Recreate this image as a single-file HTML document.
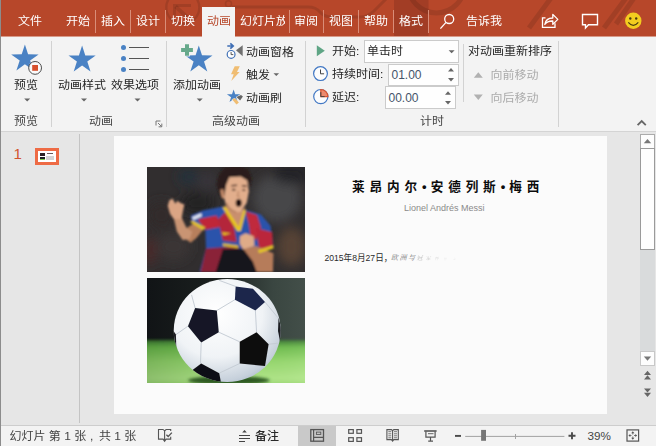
<!DOCTYPE html>
<html lang="zh-CN">
<head>
<meta charset="utf-8">
<title>PowerPoint</title>
<style>
html,body{margin:0;padding:0;}
body{width:656px;height:446px;overflow:hidden;position:relative;background:#e6e6e6;
  font-family:"Liberation Sans","Noto Sans CJK SC",sans-serif;font-size:12px;color:#262626;}
.a{position:absolute;}
.t{position:absolute;white-space:nowrap;line-height:16px;height:16px;font-size:12px;transform:scaleY(0.920);transform-origin:0 14px;}
.ns{transform:none;}
#titlebar{left:0;top:0;width:656px;height:36px;background:#b7472a;overflow:hidden;}
#titlebar .t{color:#fff;top:13px;}
.tsep{position:absolute;top:10px;width:1px;height:23px;background:#d98d78;}
#ribbon{left:0;top:36px;width:656px;height:95px;background:#f3f3f3;}
.gsep{position:absolute;top:41px;width:1px;height:86px;background:#d2d2d2;}
.glabel{color:#444;}
.dis{color:#ababab;}
.bl{letter-spacing:4.100px;font-size:13px;position:relative;top:0.500px;}
#status{left:0;top:426px;width:656px;height:20px;background:#f3f3f3;}
</style>
</head>
<body>
<!-- ===== title / tab bar ===== -->
<div id="titlebar" class="a">
  <svg class="a" style="left:0;top:0" width="656" height="36" viewBox="0 0 656 36">
    <rect x="394" y="0" width="34.500" height="36" fill="#a23d25"/>
    <g fill="none" stroke="#000" stroke-opacity="0.110">
      <circle cx="182.800" cy="7.500" r="16.500" stroke-width="2.400"/>
      <path d="M173 5.500h18M174.500 4v11.500" stroke-width="3"/>
      <path d="M175.500 6.500l11.500 10.500" stroke-width="3.800"/>
      <circle cx="228.500" cy="3.800" r="3" stroke-width="1.600"/>
    </g>
    <g fill="none" stroke="#000" stroke-opacity="0.110">
      <circle cx="436.400" cy="-15.400" r="28.300" stroke-width="5"/>
      <path d="M232 7h76q8 0 12 5t12 5h28q8 0 14-6l14-14" stroke-width="3"/>
      <path d="M529 28l22-30M604 28l22-30M616 24l18-26" stroke-width="5"/>
    </g>
  </svg>
  <svg class="a" style="left:430px;top:0" width="226" height="36" viewBox="430 0 226 36">
    <g fill="none" stroke="#fff" stroke-width="1.300">
      <circle cx="449.200" cy="19" r="4.500"/>
      <path d="M446 22.400l-5.600 6.200"/>
      <path d="M545.500 17.800h-3v9.500h12.500v-4"/>
      <path d="M544.800 24.500q1-6.500 8-6.500v-3.600l5 5-5 5v-3.400q-5.500-0.200-8 3.500z" stroke-linejoin="round"/>
      <path d="M582.500 14.500h15v10.300h-9l-3 3.200v-3.200h-3z" stroke-width="1.400"/>
    </g>
    <circle cx="633.300" cy="20.800" r="8.200" fill="#f3cd1f"/>
    <circle cx="630.300" cy="18.500" r="1.200" fill="#4a3a10"/>
    <circle cx="636.200" cy="18.500" r="1.200" fill="#4a3a10"/>
    <path d="M628.300 22.300q5 6 10 0" fill="none" stroke="#4a3a10" stroke-width="1.200"/>
  </svg>
  <div class="a" style="left:202px;top:7px;width:33px;height:29px;background:#f3f3f3;"></div>
  <div class="t" style="left:18px;">文件</div>
  <div class="t" style="left:66px;">开始</div>
  <div class="tsep" style="left:95px;"></div>
  <div class="t" style="left:101px;">插入</div>
  <div class="tsep" style="left:130px;"></div>
  <div class="t" style="left:136px;">设计</div>
  <div class="tsep" style="left:165px;"></div>
  <div class="t" style="left:171px;">切换</div>
  <div class="t" style="left:207px;color:#b7472a;">动画</div>
  <div class="t" style="left:240px;width:44.500px;overflow:hidden;">幻灯片放映</div>
  <div class="tsep" style="left:288.500px;"></div>
  <div class="t" style="left:294px;">审阅</div>
  <div class="tsep" style="left:323px;"></div>
  <div class="t" style="left:329px;">视图</div>
  <div class="tsep" style="left:358px;"></div>
  <div class="t" style="left:364px;">帮助</div>
  <div class="tsep" style="left:393px;"></div>
  <div class="t" style="left:399px;">格式</div>
  <div class="tsep" style="left:428px;"></div>
  <div class="t" style="left:466px;">告诉我</div>
</div>

<!-- ===== ribbon ===== -->
<div id="ribbon" class="a"></div>
<div class="gsep" style="left:51px;"></div>
<div class="gsep" style="left:166px;"></div>
<div class="gsep" style="left:305px;"></div>
<div class="gsep" style="left:463px;top:44px;height:58px;"></div>
<div class="gsep" style="left:558px;"></div>

<div class="t" style="left:14px;top:77px;">预览</div>
<div class="t" style="left:58px;top:77px;">动画样式</div>
<div class="t" style="left:111px;top:77px;">效果选项</div>
<div class="t" style="left:173px;top:77px;">添加动画</div>
<div class="t" style="left:246px;top:44px;">动画窗格</div>
<div class="t" style="left:246px;top:67px;">触发</div>
<div class="t" style="left:246px;top:90px;">动画刷</div>

<div class="t glabel" style="left:14px;top:113px;">预览</div>
<div class="t glabel" style="left:89px;top:113px;">动画</div>
<div class="t glabel" style="left:212px;top:113px;">高级动画</div>
<div class="t glabel" style="left:420px;top:113px;">计时</div>

<div class="t" style="left:332px;top:43px;">开始:</div>
<div class="t" style="left:332px;top:66px;">持续时间:</div>
<div class="t" style="left:332px;top:89px;">延迟:</div>
<div class="a" style="left:364px;top:40px;width:93px;height:21px;border:1px solid #cbcbcb;background:#fefefe;"></div>
<div class="t" style="left:367px;top:43px;">单击时</div>
<div class="a" style="left:388px;top:64px;width:69px;height:20px;border:1px solid #cbcbcb;background:#fefefe;"></div>
<div class="t ns" style="left:391.500px;top:67px;font-size:12px;color:#44546a;">01.00</div>
<div class="a" style="left:385px;top:86px;width:69px;height:21px;border:1px solid #cbcbcb;background:#fefefe;"></div>
<div class="t ns" style="left:388.500px;top:90px;font-size:12px;color:#44546a;">00.00</div>

<div class="t" style="left:468px;top:43px;">对动画重新排序</div>
<div class="t dis" style="left:490.500px;top:67px;">向前移动</div>
<div class="t dis" style="left:490.500px;top:90px;">向后移动</div>


<!-- ribbon icons -->
<svg class="a" style="left:0;top:36px" width="656" height="95" viewBox="0 36 656 95">
  <!-- preview star -->
  <polygon fill="#4a82c4" points="24.9,44.4 28.1,54.3 38.6,54.4 30.1,60.5 33.4,70.4 24.9,64.3 16.4,70.4 19.7,60.5 11.2,54.4 21.7,54.3"/>
  <circle cx="35.100" cy="67.900" r="6.400" fill="#fafafa" stroke="#4a4a4a" stroke-width="1"/>
  <rect x="32.200" y="65" width="5.800" height="5.800" fill="#d8502d"/>
  <!-- animation styles star -->
  <polygon fill="#4a82c4" points="82.1,45.5 85.3,55.5 95.7,55.5 87.3,61.6 90.5,71.5 82.1,65.4 73.7,71.5 76.9,61.6 68.5,55.5 78.9,55.5"/>
  <!-- effect options -->
  <g fill="#4a82c4"><circle cx="123.500" cy="47.500" r="2.500"/><circle cx="123.500" cy="58.500" r="2.500"/><circle cx="123.500" cy="69.400" r="2.500"/></g>
  <g stroke="#555" stroke-width="1"><line x1="129" y1="47.5" x2="149" y2="47.5"/><line x1="129" y1="58.5" x2="149" y2="58.5"/><line x1="129" y1="69.5" x2="149" y2="69.5"/></g>
  <!-- add animation -->
  <polygon fill="#4a82c4" points="198.8,45.4 202.0,55.3 212.5,55.4 204.0,61.5 207.3,71.4 198.8,65.3 190.3,71.4 193.6,61.5 185.1,55.4 195.6,55.3"/>
  <path d="M185 44.200h4v3.800h3.900v4h-3.900v3.800h-4v-3.800h-3.900v-4h3.900z" fill="#67a98b" stroke="#f3f3f3" stroke-width="1.600" paint-order="stroke"/>
  <!-- dropdown arrows under big buttons -->
  <g fill="#666">
    <path d="M24.2 98.5h6l-3 3z"/><path d="M81 98.5h6l-3 3z"/><path d="M134.5 98.5h6l-3 3z"/><path d="M196.7 98.5h6l-3 3z"/>
    <path d="M273.5 73.2h5.6l-2.8 2.8z"/>
  </g>
  <!-- animation pane icon -->
  <path d="M227.300 46h5M230.300 43.300l2.900 2.700-2.900 2.700" fill="none" stroke="#3f6fb5" stroke-width="1.700"/>
  <polygon points="236,50.200 242.700,45.200 242.700,56.200" fill="#707070"/>
  <circle cx="231.100" cy="54.400" r="3.900" fill="#fff" stroke="#3f6fb5" stroke-width="1.200"/>
  <path d="M231.100 52v2.600h2.200" fill="none" stroke="#444" stroke-width="0.900"/>
  <!-- trigger lightning -->
  <polygon fill="#f0bd72" points="234.700,66.200 239.800,66.200 237,72 239.600,72 231.300,81 233.700,74.300 231,74.300"/>
  <!-- animation painter -->
  <polygon fill="#4a82c4" points="233.6,89.4 235.2,94.2 240.3,94.2 236.1,97.2 237.7,102.1 233.6,99.1 229.5,102.1 231.1,97.2 226.9,94.2 232.0,94.2"/>
  <path d="M232.200 99.500l2.700-1.200 4 4.300-2.400 1.800z" fill="#f0bd72" stroke="#f3f3f3" stroke-width="0.800" paint-order="stroke"/>
  <path d="M236.500 97.100l4.500-2.200 1.900 1.600-2.800 4z" fill="#666" stroke="#f3f3f3" stroke-width="0.800" paint-order="stroke"/>
  <!-- timing icons -->
  <polygon points="316.8,45.3 316.8,56.2 324.8,50.7" fill="#5fa585"/>
  <circle cx="320.5" cy="73.6" r="6.9" fill="#fcfcfc" stroke="#4278c4" stroke-width="1.2"/>
  <path d="M320.5 69.5v4.3h3.6" fill="none" stroke="#444" stroke-width="1"/>
  <circle cx="320.8" cy="96.6" r="7.1" fill="#fcfcfc" stroke="#4278c4" stroke-width="1.2"/>
  <path d="M320.8 96.6v-7.1a7.1 7.1 0 0 1 7.1 7.1z" fill="#ec8a6e" stroke="#d9532f" stroke-width="1.2"/>
  <path d="M320.8 92.2v4.4h3.8" fill="none" stroke="#444" stroke-width="1"/>
  <!-- combobox arrows / spinners -->
  <g fill="#666">
    <path d="M448.6 50.2h6l-3 3z"/>
    <path d="M448 71.500h6l-3-3.600z"/><path d="M448 77.900h6l-3 3.600z"/>
    <path d="M445 94.800h6l-3-3.600z"/><path d="M445 101h6l-3 3.600z"/>
  </g>
  <!-- reorder arrows -->
  <g fill="#b1b1b1">
    <path d="M473.8 77.8h9l-4.5-5.6z"/>
    <path d="M473.8 94.6h9l-4.5 5.4z"/>
  </g>
  <!-- dialog launcher -->
  <path d="M156 125.5v-4.5h4.5M158 123l3.6 3.6M161.8 123.6v3.2h-3.2" fill="none" stroke="#777" stroke-width="1"/>
  <!-- collapse ribbon chevron -->
  <path d="M637.6 125.2l4.1-4.1 4.1 4.1" fill="none" stroke="#666" stroke-width="1.8"/>
</svg>

<!-- ===== workspace ===== -->
<div class="a" style="left:0;top:131px;width:656px;height:1px;background:#d4d4d4;"></div>
<div class="a" style="left:79px;top:134px;width:1px;height:289px;background:#c4c4c4;"></div>
<div class="a" style="left:114px;top:136px;width:493px;height:278px;background:#fbfbfb;"></div>

<div class="t ns" style="left:13.500px;top:146px;font-size:15px;color:#d2532d;">1</div>
<div class="a" style="left:35px;top:148px;width:18px;height:11px;border:3px solid #ee6b45;background:#fff;"></div>
<div class="a" style="left:40px;top:153px;width:5px;height:3px;background:#2a2226;"></div>
<div class="a" style="left:40px;top:157px;width:5px;height:3px;background:linear-gradient(#1c2024 55%,#7cc850 56%);"></div>
<div class="a" style="left:47px;top:153px;width:6px;height:1px;background:#6a5a5a;"></div>
<div class="a" style="left:46px;top:156px;width:8px;height:4px;background:#d4d4d4;"></div>

<svg class="a" id="photo1" style="left:147px;top:167px" width="158" height="105" viewBox="0 0 656 436" preserveAspectRatio="none">
  <defs>
    <filter id="b1" x="-10%" y="-10%" width="120%" height="120%"><feGaussianBlur stdDeviation="3.5"/></filter>
    <filter id="b2" x="-30%" y="-30%" width="160%" height="160%"><feGaussianBlur stdDeviation="22"/></filter>
    <clipPath id="c1"><rect width="656" height="436"/></clipPath>
  </defs>
  <rect width="656" height="436" fill="#312e2f"/>
  <g clip-path="url(#c1)">
  <g filter="url(#b2)">
    <ellipse cx="540" cy="130" rx="100" ry="100" fill="#474749"/>
    <ellipse cx="600" cy="330" rx="60" ry="80" fill="#574236"/>
    <ellipse cx="110" cy="330" rx="70" ry="60" fill="#3b3634"/>
    <ellipse cx="250" cy="60" rx="40" ry="40" fill="#38363a"/>
    <ellipse cx="210" cy="150" rx="70" ry="45" fill="#232124"/>
    <ellipse cx="170" cy="40" rx="40" ry="30" fill="#23303c"/>
    <ellipse cx="10" cy="350" rx="30" ry="60" fill="#4a2a2c"/>
    <ellipse cx="60" cy="200" rx="60" ry="60" fill="#302c2a"/>
    <ellipse cx="600" cy="30" rx="80" ry="40" fill="#242326"/>
  </g>
  <g filter="url(#b1)">
    <polygon points="155,295 161,255 198,231 235,258 205,295 181,315" fill="#b77f5c"/>
    <polygon points="111,213 144,211 165,254 188,268 178,299 148,303 124,268" fill="#c99473"/>
    <polygon points="86,161 93,138 106,131 118,153 126,140 139,149 155,156 149,184 143,216 111,216 96,195" fill="#dba584"/>
    <polygon points="181,201 232,181 315,164 379,258 407,177 473,197 513,244 525,332 463,355 453,338 446,436 218,436 245,338 242,261 185,228" fill="#2c52ab"/>
    <polygon points="211,217 289,201 309,248 242,261" fill="#bf2638"/>
    <polygon points="295,217 326,187 359,238 372,311 315,305" fill="#b4253a"/>
    <polygon points="409,184 456,199 473,251 453,305 429,281 423,238" fill="#c02a3c"/>
    <polygon points="453,254 520,271 523,328 466,342" fill="#bb283a"/>
    <polygon points="245,338 379,328 389,436 222,436" fill="#8a2238"/>
    <polygon points="315,342 393,338 446,358 473,436 285,436" fill="#17121c"/>
    <polygon points="178,228 191,223 242,251 233,263" fill="#e4c322"/>
    <polygon points="186,209 225,191 228,204 193,221" fill="#dfe3ee"/>
    <polygon points="321,158 356,189 389,186 408,166 405,201 384,260 322,180" fill="#c48a69"/>
    <polygon points="326,165 401,179 383,248" fill="#c98f6e"/>
    <polygon points="313,167 326,165 381,248 401,179 411,179 389,266 374,266" fill="#e8c61c"/>
    <polygon points="289,74 297,34 322,3 376,-5 420,8 435,47 427,84 416,55 389,39 342,42 330,74 324,114 314,138 300,111" fill="#2a1f1a"/>
    <polygon points="304,94 317,91 322,131 310,129" fill="#c58b6b"/>
    <polygon points="329,74 342,43 389,39 416,56 423,101 414,149 389,186 356,189 329,162 320,127" fill="#e2ae8c"/>
    <ellipse cx="380.700" cy="149" rx="12.500" ry="16" fill="#1c0b0c"/>
    <path d="M350 78l24 -2M394 78l20 2" stroke="#4a2e22" stroke-width="6"/>
    <ellipse cx="360" cy="94" rx="8" ry="4" fill="#3a2418"/><ellipse cx="402" cy="96" rx="7" ry="4" fill="#3a2418"/>
    <path d="M380 100l-4 22l10 2" stroke="#b98362" stroke-width="5" fill="none"/>
    <path d="M330 150q10 30 40 38" stroke="#b98362" stroke-width="8" fill="none"/>
    <polygon points="399,338 453,328 525,358 523,436 456,436 440,392" fill="#b67c5a"/>
    <polygon points="386,288 409,275 443,288 446,328 399,342 385,318" fill="#dfab88"/>
    <polygon points="461,345 525,325 525,338 465,358" fill="#e4c322"/>
    <polygon points="309,271 349,275 319,283" fill="#e8c61c"/>
    <polygon points="315,317 379,326 379,337 315,328" fill="#d9b62c"/>
  </g>
  </g>
</svg>
<svg class="a" id="photo2" style="left:147px;top:278px" width="158" height="105" viewBox="0 0 656 436" preserveAspectRatio="none">
  <defs>
    <linearGradient id="bg2" x1="0" y1="0" x2="1" y2="0"><stop offset="0" stop-color="#111416"/><stop offset="0.450" stop-color="#1b201f"/><stop offset="0.800" stop-color="#3a4641"/><stop offset="1" stop-color="#434f49"/></linearGradient>
    <linearGradient id="gr2" x1="0" y1="0" x2="0" y2="1"><stop offset="0" stop-color="#3c7a33"/><stop offset="0.150" stop-color="#6fbd4e"/><stop offset="0.450" stop-color="#98d96f"/><stop offset="0.800" stop-color="#b0e688"/><stop offset="1" stop-color="#92d268"/></linearGradient>
    <linearGradient id="gr3" x1="0" y1="0" x2="1" y2="0"><stop offset="0" stop-color="#0a2a0a" stop-opacity="0.220"/><stop offset="0.600" stop-color="#0a2a0a" stop-opacity="0"/><stop offset="1" stop-color="#ffffff" stop-opacity="0.080"/></linearGradient>
    <radialGradient id="ball" cx="0.400" cy="0.330" r="0.780"><stop offset="0" stop-color="#ffffff"/><stop offset="0.550" stop-color="#f0f3f6"/><stop offset="0.850" stop-color="#c6d0db"/><stop offset="1" stop-color="#9fb0c2"/></radialGradient>
    <filter id="b3" x="-5%" y="-5%" width="110%" height="110%"><feGaussianBlur stdDeviation="2.5"/></filter>
    <filter id="b4" x="-5%" y="-20%" width="110%" height="140%"><feGaussianBlur stdDeviation="7"/></filter>
    <clipPath id="c2"><rect width="656" height="436"/></clipPath>
    <clipPath id="cb"><ellipse cx="333" cy="218" rx="222" ry="214"/></clipPath>
  </defs>
  <rect width="656" height="436" fill="url(#bg2)"/>
  <g clip-path="url(#c2)">
  <g filter="url(#b4)"><rect x="-20" y="258" width="700" height="200" fill="url(#gr2)"/><rect x="-20" y="258" width="700" height="200" fill="url(#gr3)"/></g>
  <ellipse cx="340" cy="425" rx="170" ry="18" fill="#2d5a22" filter="url(#b4)"/>
  <g filter="url(#b3)">
    <ellipse cx="333" cy="218" rx="222" ry="214" fill="url(#ball)"/>
    <g clip-path="url(#cb)">
      <g fill="none" stroke="#c5ccd4" stroke-width="4">
        <path d="M290 135 L365 90 M298 225 L385 265 M225 268 L222 355 M450 135 L455 225 M490 100 L548 170 M505 275 L552 270 M385 355 L300 395 M490 365 L470 420 M170 200 L120 235 M200 125 L185 70 M368 35 L300 10"/>
      </g>
      <polygon points="200,125 290,135 298,225 225,268 170,200" fill="#131826"/>
      <polygon points="368,35 440,45 490,100 450,135 365,90" fill="#1c274c"/>
      <polygon points="385,265 455,225 505,275 490,365 385,355" fill="#0f0f10"/>
      <polygon points="185,385 225,355 300,395 308,440 215,435" fill="#101012"/>
      <polygon points="100,205 120,235 122,300 105,290" fill="#1a1c20"/>
      <polygon points="546,165 562,225 554,272 544,220" fill="#1a1c20"/>
    </g>
  </g>
  </g>
</svg>

<div class="t ns" id="stitle" style="left:352px;top:178.500px;font-size:12.600px;font-weight:bold;letter-spacing:4.900px;color:#0c0c0c;">莱昂内尔<span class="bl">•</span>安德列斯<span class="bl">•</span>梅西</div>
<div class="t ns" id="ssub" style="left:404px;top:200px;font-size:9px;color:#8a8a8a;">Lionel Andrés Messi</div>
<div class="t ns" id="sdate" style="left:324.500px;top:250px;font-size:8.600px;color:#2a2a2a;">2015年8月27日，</div>
<div class="t ns" id="sfade" style="left:391px;top:250px;font-size:7px;letter-spacing:1.500px;font-style:italic;font-family:'Liberation Serif','Noto Serif CJK SC',serif;color:#6e6e6e;">欧洲与<span style="opacity:.55;font-size:6px;letter-spacing:3px">冠</span><span style="opacity:.4;font-size:5px;letter-spacing:4px">军</span><span style="opacity:.25;font-size:4px;letter-spacing:5px">杯</span><span style="opacity:.15;font-size:3px;letter-spacing:6px">得主</span></div>


<!-- scrollbar -->
<div class="a" style="left:640px;top:134px;width:13px;height:13px;border:1px solid #ababab;background:#fdfdfd;"></div>
<div class="a" style="left:640px;top:148px;width:13px;height:100px;border:1px solid #9a9a9a;background:#fefefe;"></div>
<div class="a" style="left:640px;top:250px;width:15px;height:101px;background:#d9dbdc;"></div>
<div class="a" style="left:640px;top:351px;width:13px;height:13px;border:1px solid #c8c8c8;background:#fdfdfd;"></div>
<svg class="a" style="left:636px;top:132px" width="20" height="290" viewBox="636 132 20 290">
  <g fill="#777">
    <path d="M643.8 143.2h7.4l-3.7-4.2z"/>
    <path d="M643.8 356.6h7.4l-3.7 4.2z"/>
  </g>
  <g fill="#666">
    <path d="M644 375h7l-3.5-4.2z"/><path d="M644 379.4h7l-3.5-4.2z"/>
    <path d="M644 388.4h7l-3.5 4.2z"/><path d="M644 392.8h7l-3.5 4.2z"/>
  </g>
</svg>

<!-- ===== status bar ===== -->
<div class="a" style="left:0;top:425px;width:656px;height:1px;background:#cdcdcd;"></div>
<div id="status" class="a"></div>

<div class="a" style="left:298px;top:426px;width:38px;height:20px;background:#c9c9c9;"></div>
<svg class="a" style="left:0;top:423px" width="656" height="23" viewBox="0 423 656 23">
  <g fill="none" stroke="#555" stroke-width="1.100">
    <!-- spell check book -->
    <path d="M163.300 429.500h-4.800v9.600h4.600l1.500 2.200 1.500-2.200h4.600v-2.400M170.700 431v-1.500h-4.600l-1.500 1.500-1.300-1.500M164.600 431v10"/>
    <path d="M166.400 434.700l1.800 1.800 3.700-3.900" stroke-width="1.300"/>
    <!-- notes -->
    <path d="M239 435.500h11M239 438.500h11M239 441.500h6" stroke="#444" stroke-width="1.200"/>
    <path d="M242.200 432.600l2.300-2.700 2.300 2.700z" fill="#444" stroke="none"/>
    <!-- normal view -->
    <rect x="310.800" y="429.600" width="12.700" height="11.600" stroke-width="1.300"/>
    <path d="M313.600 429.600v11.600M313.600 437.400h10" stroke-width="1.200"/>
    <rect x="316.400" y="432.100" width="4.400" height="2.300" stroke-width="0.900"/>
    <!-- sorter -->
    <rect x="348.700" y="429.600" width="4.600" height="3.700" stroke-width="1.200"/><rect x="356.900" y="429.600" width="4.600" height="3.700" stroke-width="1.200"/>
    <rect x="348.700" y="437.700" width="4.600" height="3.700" stroke-width="1.200"/><rect x="356.900" y="437.700" width="4.600" height="3.700" stroke-width="1.200"/>
    <!-- reading view -->
    <path d="M386.900 429.600h4.500l1.200 1.100 1.200-1.100h4.500v10h-4.500l-1.200 1.600-1.200-1.600h-4.500z M392.600 430.700v10"/>
    <path d="M388.300 431.700h3M388.300 433.800h3M388.300 435.800h3M388.300 437.800h3M394 431.700h3M394 433.800h3M394 435.800h3M394 437.800h3" stroke-width="0.800"/>
    <!-- slideshow -->
    <path d="M424.200 431h12.400" stroke-width="1.600"/>
    <path d="M425.900 431.500v5.600h9.200v-5.600M430.500 437.100v4M428.200 441.200h4.800" stroke-width="1.200"/>
    <path d="M428 433.700h5.500" stroke-width="0.900"/>
    <!-- zoom slider -->
    <path d="M465.200 436.400h99.200" stroke="#a2a2a2" stroke-width="1"/>
    <path d="M515.500 434v5" stroke="#a2a2a2" stroke-width="1"/>
    <path d="M455 435.900h6" stroke="#4a4a4a" stroke-width="1.900"/>
    <path d="M568.500 435.800h7M572 432.300v7" stroke="#4a4a4a" stroke-width="1.900"/>
    <!-- fit -->
    <rect x="627" y="429.900" width="11.600" height="11.200" stroke-width="1.200"/>
  </g>
  <rect x="481.100" y="429.900" width="4.900" height="10.900" fill="#767676"/>
  <g fill="#555">
    <path d="M632.800 431.300l1.600 1.900h-3.200zM632.800 439.700l1.600-1.900h-3.200zM628.400 435.500l1.900-1.600v3.200zM637.200 435.500l-1.900-1.600v3.200z"/>
  </g>
  <path d="M632.800 432.500v2M632.800 436.500v2M629.500 435.500h2M634 435.500h2" stroke="#555" stroke-width="0.800"/>
</svg>
<div class="t" style="left:9.500px;top:427.600px;color:#444;">幻灯片 第 1 张</div>
<div class="t" style="left:90px;top:427.600px;color:#444;">,</div>
<div class="t" style="left:99px;top:427.600px;color:#444;">共 1 张</div>
<div class="t" style="left:255px;top:427.600px;color:#2a2a2a;font-weight:500;">备注</div>
<div class="t ns" style="left:587.500px;top:427.600px;color:#444;font-size:11.700px;">39%</div>
<div class="a" style="left:0;top:36px;width:656px;height:1px;background:#d79a89;"></div>
<div class="a" style="left:202px;top:36px;width:33px;height:1px;background:#f3f3f3;"></div>
<div class="a" style="left:0;top:0;width:1px;height:446px;background:#8c8c8c;"></div>
</body>
</html>
